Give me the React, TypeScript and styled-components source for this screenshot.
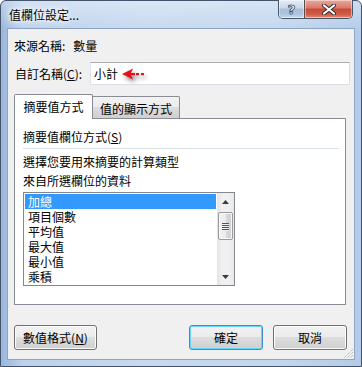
import styled, { createGlobalStyle } from "styled-components";

const GlobalStyle = createGlobalStyle`
  html, body {
    margin: 0;
    padding: 0;
    background: #ffffff;
  }
  body {
    font-family: "Noto Sans CJK TC", "Noto Sans", sans-serif;
    font-size: 12px;
    color: #000;
  }
`;

const Window = styled.div`
  position: relative;
  width: 362px;
  height: 367px;
  box-sizing: border-box;
  border: 1px solid #43536a;
  border-radius: 6px 6px 0 0;
  padding: 0 6px 6px 6px;
  display: flex;
  flex-direction: column;
  background: linear-gradient(
      to bottom,
      rgba(255, 255, 255, 0.35) 0px,
      rgba(255, 255, 255, 0) 30px
    ),
    linear-gradient(
      to right,
      #9ab6dc 0%,
      #bcd1ec 6%,
      #c6d9f0 40%,
      #c3d7ef 75%,
      #b3cbe8 100%
    );
`;

const TitleBar = styled.div`
  height: 27px;
  display: flex;
  align-items: flex-start;
  justify-content: space-between;
  padding: 0 2px 0 2px;
`;

const Caption = styled.div`
  align-self: center;
  line-height: 16px;
  padding-top: 1px;
  color: #000;
  text-shadow: 0 0 6px #ffffff, 0 0 3px #ffffff, 0 0 10px rgba(255, 255, 255, 0.9);
`;

const Controls = styled.div`
  display: flex;
  height: 18px;
  border: 1px solid #48566b;
  border-top: none;
  border-radius: 0 0 5px 5px;
  overflow: hidden;
  margin-top: -1px;
`;

const CaptionButton = styled.div<{ $close?: boolean }>`
  width: ${(p) => (p.$close ? 47 : 25)}px;
  height: 18px;
  display: flex;
  align-items: center;
  justify-content: center;
  box-shadow: inset 0 0 0 1px rgba(255, 255, 255, 0.45);
  border-left: ${(p) => (p.$close ? "1px solid #5a4a4a" : "none")};
  background: ${(p) =>
    p.$close
      ? "linear-gradient(to bottom, #e9a99a 0%, #d7786a 45%, #c44a36 50%, #cf5d48 80%, #e58c72 100%)"
      : "linear-gradient(to bottom, #e4ecf6 0%, #c9d7e9 45%, #a9bdd8 50%, #b3c6df 80%, #cbdaee 100%)"};
`;

const HelpGlyph = styled.span`
  font-family: "DejaVu Sans", sans-serif;
  font-weight: bold;
  font-size: 13px;
  line-height: 13px;
  color: #ffffff;
  -webkit-text-stroke: 0.6px #2a3442;
  text-shadow: 0 0 1px #1c2533;
`;

const Client = styled.div`
  position: relative;
  flex: 1;
  background: #f0f0f0;
  border: 1px solid #8ea4c2;
  display: flex;
  flex-direction: column;
  padding: 9px 6px 0 6px;
`;

const SourceRow = styled.div`
  line-height: 16px;
  height: 16px;
  display: flex;
`;

const SourceValue = styled.span`
  margin-left: 8px;
`;

const NameRow = styled.div`
  margin-top: 8px;
  height: 23px;
  display: flex;
  align-items: center;
`;

const NameLabel = styled.div`
  width: 75px;
  padding-left: 1px;
  line-height: 16px;
`;

const Key = styled.span`
  text-decoration: underline;
  text-underline-offset: 1px;
`;

const TextBox = styled.div`
  flex: 1;
  height: 23px;
  box-sizing: border-box;
  margin-right: -2px;
  background: #ffffff;
  border: 1px solid #dbdfe6;
  border-top-color: #abadb3;
  border-left-color: #e2e3ea;
  padding-left: 3px;
  display: flex;
  align-items: center;
  line-height: 16px;
`;

const Pointer = styled.svg`
  margin-left: 4px;
  margin-top: 3px;
  filter: drop-shadow(2px 3px 2px rgba(0, 0, 0, 0.45));
`;

const TabStrip = styled.div`
  margin-top: 9px;
  display: flex;
  align-items: flex-end;
  height: 24px;
`;

const Tab = styled.div<{ $active?: boolean }>`
  position: relative;
  z-index: ${(p) => (p.$active ? 1 : 0)};
  box-sizing: border-box;
  height: ${(p) => (p.$active ? 25 : 22)}px;
  width: ${(p) => (p.$active ? 79 : 88)}px;
  margin-bottom: ${(p) => (p.$active ? -1 : 0)}px;
  margin-left: ${(p) => (p.$active ? 0 : -1)}px;
  border: 1px solid #898c95;
  border-bottom: none;
  border-radius: 2px 2px 0 0;
  background: ${(p) =>
    p.$active
      ? "#ffffff"
      : "linear-gradient(to bottom, #f3f3f3 0%, #ebebeb 50%, #dddddd 50%, #cfcfcf 100%)"};
  display: flex;
  justify-content: center;
  align-items: center;
  padding-top: ${(p) => (p.$active ? 0 : 2)}px;
  line-height: 16px;
`;

const Panel = styled.div`
  width: 332px;
  height: 187px;
  box-sizing: border-box;
  border: 1px solid #898c95;
  background: #ffffff;
  padding: 10px 6px 0 8px;
  display: flex;
  flex-direction: column;
`;

const GroupLabel = styled.div`
  line-height: 16px;
`;

const Separator = styled.div`
  margin-top: 3px;
  height: 1px;
  background: #d5dfe5;
`;

const Hint = styled.div`
  margin-top: 3px;
  line-height: 19px;
`;

const ListBox = styled.div`
  margin-top: 2px;
  width: 212px;
  height: 94px;
  box-sizing: border-box;
  border: 1px solid #828790;
  display: flex;
`;

const Items = styled.div`
  flex: 1;
  padding: 1px;
  overflow: hidden;
`;

const Item = styled.div<{ $selected?: boolean }>`
  height: 15px;
  line-height: 15px;
  padding-left: 3px;
  white-space: nowrap;
  background: ${(p) => (p.$selected ? "#3399ff" : "transparent")};
  color: ${(p) => (p.$selected ? "#ffffff" : "#000000")};
`;

const ScrollBar = styled.div`
  width: 17px;
  display: flex;
  flex-direction: column;
  background: linear-gradient(to right, #e4e4e4 0%, #f0f0f0 30%, #f0f0f0 70%, #e8e8e8 100%);
`;

const ScrollArrow = styled.div`
  height: 17px;
  display: flex;
  align-items: center;
  justify-content: center;
`;

const Thumb = styled.div`
  margin: 2px 1px 0 1px;
  height: 28px;
  box-sizing: border-box;
  border: 1px solid #9a9a9a;
  border-radius: 2px;
  background: linear-gradient(to right, #f2f2f2 0%, #ebebeb 50%, #d9d9d9 50%, #cfcfcf 100%);
  box-shadow: inset 0 0 0 1px #f7f7f7;
  display: flex;
  flex-direction: column;
  align-items: center;
  justify-content: center;
  gap: 1px;
`;

const Grip = styled.div`
  width: 7px;
  height: 1px;
  background: #555;
  box-shadow: 0 1px 0 #eee;
`;

const TrackFill = styled.div`
  flex: 1;
`;

const ButtonRow = styled.div`
  margin-top: 20px;
  width: 333px;
  display: flex;
  justify-content: space-between;
`;

const ButtonGroup = styled.div`
  display: flex;
  gap: 10px;
`;

const Button = styled.div<{ $width: number; $default?: boolean }>`
  width: ${(p) => p.$width}px;
  height: 25px;
  box-sizing: border-box;
  border: 1px solid ${(p) => (p.$default ? "#3c8fc4" : "#707070")};
  border-radius: 3px;
  background: linear-gradient(to bottom, #f2f2f2 0%, #ebebeb 50%, #dddddd 50%, #cfcfcf 100%);
  box-shadow: inset 0 0 0 1px ${(p) => (p.$default ? "#66d5f8" : "#fbfbfb")};
  display: flex;
  align-items: center;
  justify-content: center;
  line-height: 16px;
`;

const SizeGrip = styled.svg`
  position: absolute;
  right: 0;
  bottom: 0;
`;

const functions = ["加總", "項目個數", "平均值", "最大值", "最小值", "乘積"];

export default function App() {
  return (
    <>
      <GlobalStyle />
      <Window>
        <TitleBar>
          <Caption>值欄位設定...</Caption>
          <Controls>
            <CaptionButton>
              <HelpGlyph>?</HelpGlyph>
            </CaptionButton>
            <CaptionButton $close>
              <svg width="14" height="11" viewBox="0 0 14 11">
                <path d="M2 1.5 L12 9.5 M12 1.5 L2 9.5" stroke="#3a2a2a" strokeWidth="4" strokeLinecap="round" />
                <path d="M2 1.5 L12 9.5 M12 1.5 L2 9.5" stroke="#ffffff" strokeWidth="2.2" strokeLinecap="round" />
              </svg>
            </CaptionButton>
          </Controls>
        </TitleBar>
        <Client>
          <SourceRow>
            來源名稱:<SourceValue>數量</SourceValue>
          </SourceRow>
          <NameRow>
            <NameLabel>
              自訂名稱(<Key>C</Key>):
            </NameLabel>
            <TextBox>
              小計
              <Pointer width="26" height="14" viewBox="0 0 26 14">
                <path d="M0 6 L11 0.5 L8.5 6 L11 11.5 Z" fill="#e8101b" />
                <rect x="8" y="5" width="5" height="2.2" fill="#e8101b" />
                <rect x="14" y="5" width="3" height="2.2" fill="#e8101b" />
                <rect x="19" y="5" width="3" height="2.2" fill="#e8101b" />
              </Pointer>
            </TextBox>
          </NameRow>
          <TabStrip>
            <Tab $active>摘要值方式</Tab>
            <Tab>值的顯示方式</Tab>
          </TabStrip>
          <Panel>
            <GroupLabel>
              摘要值欄位方式(<Key>S</Key>)
            </GroupLabel>
            <Separator />
            <Hint>
              選擇您要用來摘要的計算類型
              <br />
              來自所選欄位的資料
            </Hint>
            <ListBox>
              <Items>
                {functions.map((name, i) => (
                  <Item key={name} $selected={i === 0}>
                    {name}
                  </Item>
                ))}
              </Items>
              <ScrollBar>
                <ScrollArrow>
                  <svg width="7" height="4" viewBox="0 0 7 4">
                    <path d="M0 4 L3.5 0 L7 4 Z" fill="#3b3b3b" />
                  </svg>
                </ScrollArrow>
                <Thumb>
                  <Grip />
                  <Grip />
                  <Grip />
                  <Grip />
                </Thumb>
                <TrackFill />
                <ScrollArrow>
                  <svg width="7" height="4" viewBox="0 0 7 4">
                    <path d="M0 0 L7 0 L3.5 4 Z" fill="#3b3b3b" />
                  </svg>
                </ScrollArrow>
              </ScrollBar>
            </ListBox>
          </Panel>
          <ButtonRow>
            <Button $width={83}>
              數值格式(<Key>N</Key>)
            </Button>
            <ButtonGroup>
              <Button $width={74} $default>
                確定
              </Button>
              <Button $width={74}>取消</Button>
            </ButtonGroup>
          </ButtonRow>
          <SizeGrip width="10" height="10" viewBox="0 0 10 10">
            <path d="M9 3 L3 9 M9 6 L6 9 M9 0 L0 9" stroke="#a9a9a9" strokeWidth="1" strokeDasharray="1 1" />
          </SizeGrip>
        </Client>
      </Window>
    </>
  );
}
